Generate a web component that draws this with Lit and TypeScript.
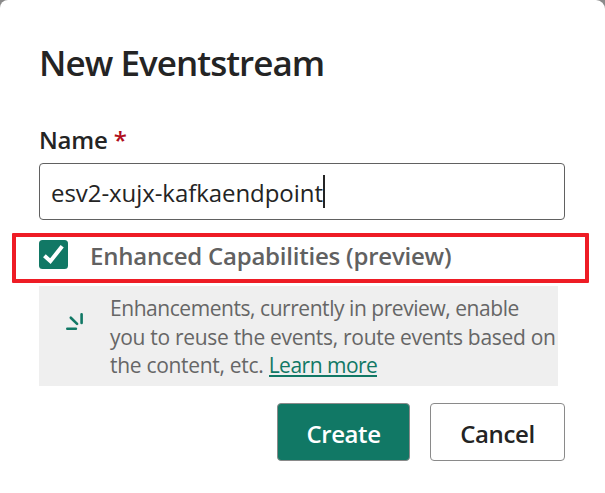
import { LitElement, html, css } from "lit";
import { customElement } from "lit/decorators.js";

@customElement("app-root")
export class AppRoot extends LitElement {
  static styles = css`
    :host {
      display: block;
      height: 493px;
      overflow: hidden;
      background: #8a8a8a;
      color: #242424;
      font-family: "Open Sans", "Noto Sans", sans-serif;
    }
    * { box-sizing: border-box; }
    .dialog {
      height: 493px;
      background: #fff;
      border-radius: 8px 9px 0 0;
      padding: 39px 40px 0 39px;
      white-space: nowrap;
    }
    h1 {
      margin: 0;
      height: 48px;
      font-size: 35px;
      line-height: 48px;
      font-weight: 600;
      letter-spacing: -0.95px;
    }
    .label {
      display: block;
      margin-top: 37px;
      height: 32px;
      line-height: 32px;
      font-size: 24px;
      font-weight: 600;
      letter-spacing: -0.2px;
    }
    .req { color: #b10e1c; }
    .field {
      margin-top: 7px;
      height: 57px;
      border: 1px solid #616161;
      border-radius: 4px;
      padding-left: 11px;
      display: flex;
      align-items: center;
      font-size: 24px;
      letter-spacing: -0.06px;
    }
    .value { padding-top: 2px; }
    .caret { width: 2px; height: 33px; background: #242424; }
    .highlight {
      margin: 13px -24px 0 -27px;
      height: 50px;
      border: 4px solid #ee1c25;
      border-radius: 1px;
      padding: 3px 0 0 23px;
      display: flex;
    }
    .check { width: 29px; height: 29px; flex: none; }
    .option {
      margin-left: 22px;
      height: 32px;
      line-height: 32px;
      font-size: 24px;
      font-weight: 600;
      letter-spacing: -0.22px;
      color: #616161;
    }
    .info {
      margin-top: 3px;
      width: 519px;
      height: 100px;
      background: #efefef;
      display: flex;
      color: #666;
      font-size: 21px;
      line-height: 28.5px;
      padding-top: 8px;
    }
    .spark { width: 24px; height: 24px; margin: 16px 24px 0 23px; flex: none; }
    .line { height: 28.5px; letter-spacing: -0.3px; }
    .tight { letter-spacing: -0.45px; }
    a {
      display: inline-block;
      height: 26px;
      border-bottom: 2px solid #117865;
      color: #117865;
      letter-spacing: -0.5px;
      text-decoration: none;
    }
    .actions {
      margin-top: 17px;
      display: flex;
      justify-content: flex-end;
      gap: 20px;
    }
    button {
      height: 58px;
      width: 135px;
      padding: 2px 0 0;
      border: 1px solid #8a8a8a;
      border-radius: 4px;
      background: #fff;
      color: #242424;
      font: 600 24px "Open Sans", "Noto Sans", sans-serif;
      letter-spacing: -0.4px;
    }
    .primary { width: 133px; background: #117865; color: #fff; }
  `;

  render() {
    return html`
      <div class="dialog">
        <h1>New Eventstream</h1>
        <label class="label">Name <span class="req">*</span></label>
        <div class="field"><span class="value">esv2-xujx-kafkaendpoint</span><span class="caret"></span></div>
        <div class="highlight">
          <svg class="check" viewBox="0 0 29 29">
            <rect width="29" height="29" rx="3.5" fill="#117865" />
            <path d="M5.4 15.8 11.4 21.2 23.2 6.2" fill="none" stroke="#fff" stroke-width="4" />
          </svg>
          <span class="option">Enhanced Capabilities (preview)</span>
        </div>
        <div class="info">
          <svg class="spark" viewBox="0 0 24 24" fill="none" stroke="#117865" stroke-width="2.6" stroke-linecap="round">
            <path d="M19.6 4.2v8.8M8.8 7.7l6.3 6.2M5.3 18.7h8.6" />
          </svg>
          <div>
            <div class="line tight">Enhancements, currently in preview, enable</div>
            <div class="line">you to reuse the events, route events based on</div>
            <div class="line">the content, etc. <a>Learn more</a></div>
          </div>
        </div>
        <div class="actions">
          <button class="primary">Create</button>
          <button>Cancel</button>
        </div>
      </div>
    `;
  }
}
